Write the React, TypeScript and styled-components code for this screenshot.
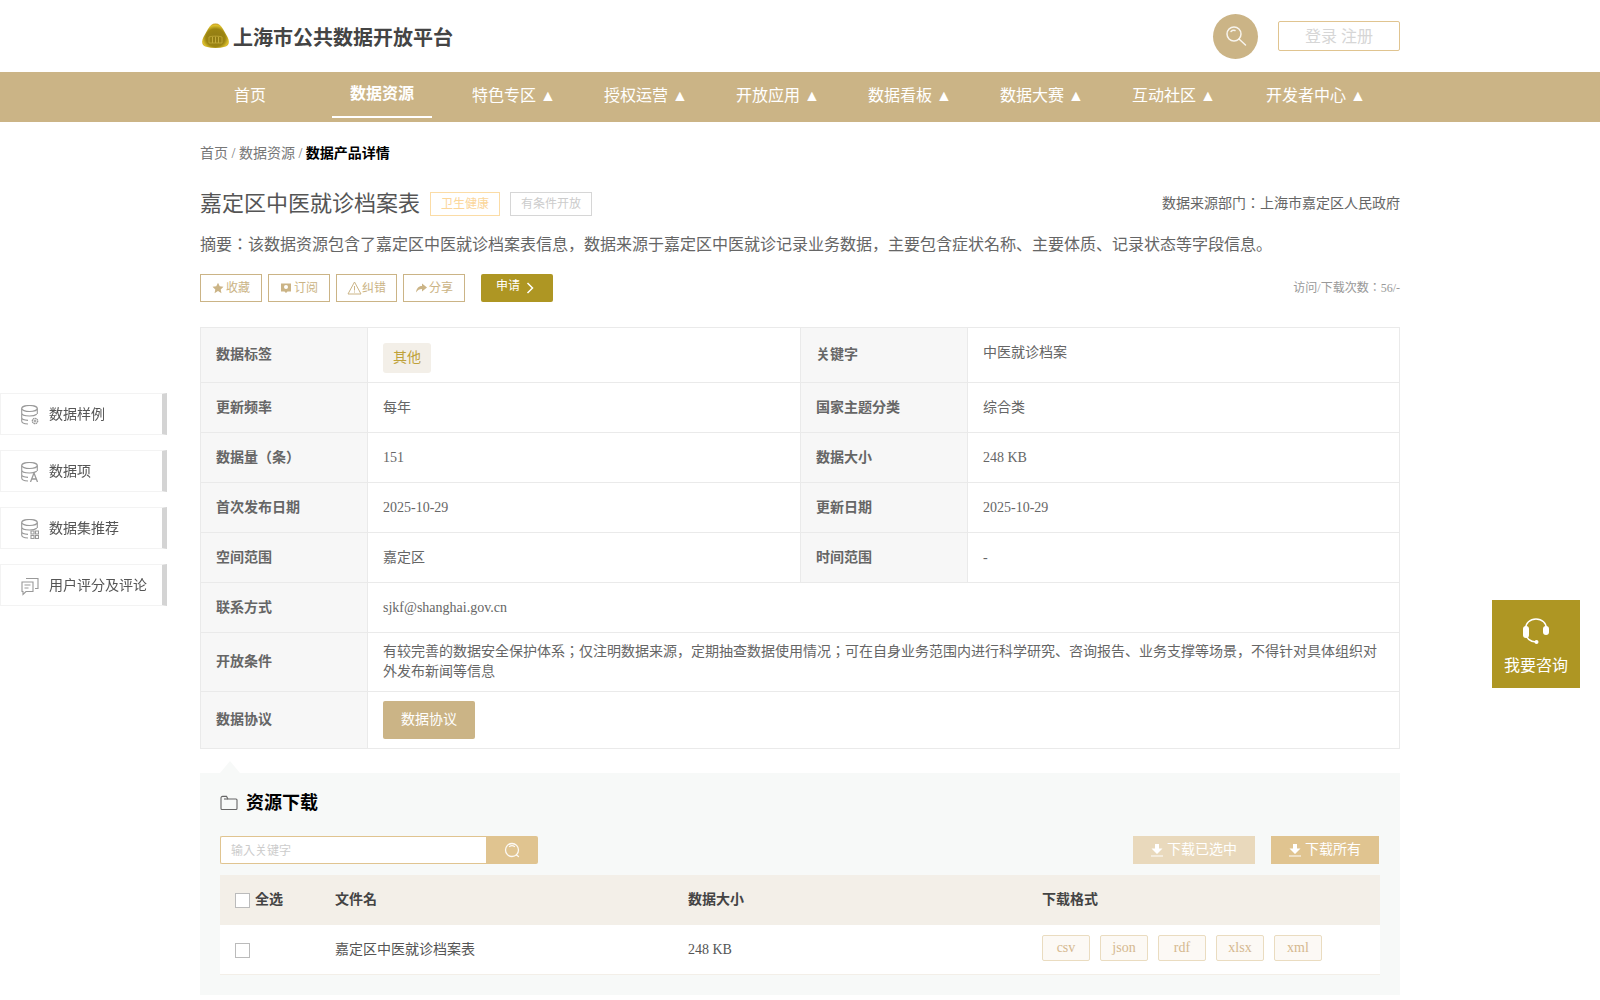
import { memo, FC, ReactNode } from 'react';
import styled, { createGlobalStyle } from 'styled-components';

const GOLD = '#cbb486';
const GOLD_LIGHT = '#e0c490';
const OLIVE = '#ae9623';

const GlobalStyle = createGlobalStyle`
  html, body { margin: 0; padding: 0; background: #fff; }
  body {
    font-family: "Liberation Serif", "Noto Sans CJK JP", serif;
    color: #666;
    overflow-x: hidden;
  }
  * { box-sizing: border-box; }
`;

const Wrap = styled.div`
  width: 1200px;
  margin: 0 auto;
`;

const Header = styled(Wrap)`
  height: 72px;
  display: flex;
  align-items: center;
  justify-content: space-between;
`;

const Brand = styled.div`
  display: flex;
  align-items: center;
  gap: 4px;
  padding-left: 2px;
`;

const BrandName = styled.span`
  padding-top: 4px;
  font-size: 20px;
  line-height: 26px;
  font-weight: 700;
  color: #444;
`;

const HeaderRight = styled.div`
  display: flex;
  align-items: center;
  gap: 20px;
`;

const SearchCircle = styled.div`
  width: 45px;
  height: 45px;
  border-radius: 50%;
  background: ${GOLD};
  display: flex;
  align-items: center;
  justify-content: center;
`;

const LoginBox = styled.div`
  width: 122px;
  height: 30px;
  border: 1px solid ${GOLD_LIGHT};
  border-radius: 2px;
  color: #d6d6d6;
  font-size: 16px;
  line-height: 29px;
  text-align: center;
`;

const NavBar = styled.div`
  height: 50px;
  background: ${GOLD};
`;

const NavRow = styled(Wrap)`
  display: flex;
  gap: 32px;
  height: 100%;
`;

const NavItem = styled.div<{ $active?: boolean }>`
  min-width: 100px;
  padding: 0 8px;
  height: 46px;
  line-height: ${p => (p.$active ? '44px' : '47px')};
  text-align: center;
  white-space: nowrap;
  color: #fff;
  font-size: 16px;
  font-weight: ${p => (p.$active ? 700 : 400)};
  border-bottom: ${p => (p.$active ? '2px solid #fff' : 'none')};

  &:last-child { margin-left: 2px; }
`;

const Breadcrumb = styled.div`
  margin-top: 22px;
  height: 20px;
  line-height: 20px;
  font-size: 14px;
  color: #777;
  b { color: #000; }
`;

const TitleRow = styled.div`
  margin-top: 20px;
  height: 40px;
  line-height: 24px;
  display: flex;
  align-items: center;
`;

const Title = styled.h1`
  margin: 0 10px 0 0;
  font-size: 22px;
  line-height: 30px;
  font-weight: 400;
  color: #555;
`;

const Tag = styled.span<{ $grey?: boolean }>`
  height: 24px;
  line-height: 22px;
  padding: 0 10px;
  margin-right: 10px;
  font-size: 12px;
  border: 1px solid ${p => (p.$grey ? '#d6d6d6' : '#fbdca6')};
  color: ${p => (p.$grey ? '#ccc' : '#fbd69a')};
`;

const Source = styled.div`
  margin-left: auto;
  font-size: 14px;
  color: #666;
`;

const Summary = styled.p`
  margin: 10px 0 0;
  font-size: 16px;
  line-height: 22px;
  color: #666;
`;

const ActionRow = styled.div`
  margin-top: 18px;
  height: 28px;
  display: flex;
  align-items: center;
  gap: 6px;
`;

const ActionBtn = styled.div<{ $w: number }>`
  height: 28px;
  width: ${p => p.$w}px;
  border: 1px solid ${GOLD};
  color: ${GOLD};
  font-size: 12px;
  line-height: 20px;
  display: flex;
  align-items: center;
  justify-content: center;
  gap: 2px;
`;

const ApplyBtn = styled.div`
  margin-left: 10px;
  width: 72px;
  height: 28px;
  background: ${OLIVE};
  border-radius: 2px;
  color: #fff;
  font-size: 12px;
  line-height: 18px;
  display: flex;
  align-items: center;
  justify-content: center;
  gap: 6px;
  padding: 0 4px 4px 0;
`;

const Visits = styled.div`
  margin-left: auto;
  font-size: 12px;
  line-height: 20px;
  color: #999;
`;

const InfoTable = styled.table`
  margin-top: 25px;
  width: 1200px;
  table-layout: fixed;
  border-collapse: separate;
  border-spacing: 0;
  border-top: 1px solid #eaeaea;
  border-left: 1px solid #eaeaea;
  font-size: 14px;
  line-height: 20px;
`;

const InfoRow = styled.tr<{ $h: number }>`
  height: ${p => p.$h}px;
`;

const Th = styled.th`
  background: #f7f7f7;
  border-right: 1px solid #eaeaea;
  border-bottom: 1px solid #eaeaea;
  padding: 0 15px;
  text-align: left;
  font-weight: 700;
  color: #666;
`;

const Td = styled.td<{ $top?: boolean }>`
  border-right: 1px solid #eaeaea;
  border-bottom: 1px solid #eaeaea;
  padding: ${p => (p.$top ? '15px 15px 0' : '0 15px')};
  vertical-align: ${p => (p.$top ? 'top' : 'middle')};
  color: #666;
`;

const LabelPill = styled.span`
  display: block;
  width: 48px;
  height: 30px;
  line-height: 30px;
  text-align: center;
  background: #f3efe8;
  border-radius: 3px;
  color: #bfa23a;
`;

const AgreementBtn = styled.div`
  width: 92px;
  height: 38px;
  background: ${GOLD};
  border-radius: 2px;
  color: #fff;
  line-height: 38px;
  text-align: center;
`;

const Download = styled.section`
  position: relative;
  margin-top: 24px;
  height: 222px;
  padding: 20px 20px 0;
  background: #f7f9f8;

  &::before {
    content: '';
    position: absolute;
    left: 20px;
    top: -12px;
    border-left: 10px solid transparent;
    border-right: 10px solid transparent;
    border-bottom: 12px solid #f7f9f8;
  }
`;

const SectionTitle = styled.div`
  height: 20px;
  line-height: 20px;
  display: flex;
  align-items: center;
  gap: 8px;
  font-size: 18px;
  font-weight: 700;
  color: #000;
`;

const Toolbar = styled.div`
  margin-top: 23px;
  height: 28px;
  display: flex;
  align-items: stretch;
`;

const KeywordInput = styled.div`
  width: 266px;
  background: #fff;
  border: 1px solid ${GOLD_LIGHT};
  border-right: none;
  border-radius: 2px 0 0 2px;
  padding-left: 10px;
  line-height: 28px;
  font-size: 12px;
  color: #ccc;
`;

const KeywordBtn = styled.div`
  width: 52px;
  background: ${GOLD_LIGHT};
  border-radius: 0 2px 2px 0;
  display: flex;
  align-items: center;
  justify-content: center;
`;

const DownloadBtn = styled.div<{ $muted?: boolean; $w: number }>`
  width: ${p => p.$w}px;
  margin-left: ${p => (p.$muted ? 'auto' : '16px')};
  margin-right: ${p => (p.$muted ? '0' : '1px')};
  background: ${p => (p.$muted ? '#e9d9bc' : GOLD_LIGHT)};
  color: #fff;
  font-size: 14px;
  line-height: 20px;
  display: flex;
  align-items: center;
  justify-content: center;
  gap: 4px;
`;

const FileGrid = styled.div<{ $head?: boolean }>`
  display: grid;
  grid-template-columns: 115px 353px 354px 1fr;
  align-items: center;
  height: 50px;
  line-height: 20px;
  margin-top: ${p => (p.$head ? '11px' : '0')};
  background: ${p => (p.$head ? '#f3efe8' : '#fff')};
  border-bottom: ${p => (p.$head ? 'none' : '1px solid #f3efe8')};
  font-size: 14px;
  font-weight: ${p => (p.$head ? 700 : 400)};
  color: ${p => (p.$head ? '#444' : '#555')};
`;

const CheckCell = styled.div`
  display: flex;
  align-items: center;
  gap: 5px;
  padding-left: 15px;
`;

const Check = styled.span`
  width: 15px;
  height: 15px;
  margin-top: 1px;
  background: #fff;
  border: 1px solid #bbb;
`;

const Formats = styled.div`
  display: flex;
  gap: 10px;
  margin-bottom: 3px;
`;

const Format = styled.span`
  width: 48px;
  height: 26px;
  line-height: 24px;
  text-align: center;
  background: #fcf9f5;
  border: 1px solid #eadcc0;
  border-radius: 2px;
  color: #d5b88f;
  font-size: 14px;
`;

const SideNav = styled.nav`
  position: fixed;
  left: 0;
  top: 393px;
  display: flex;
  flex-direction: column;
  gap: 15px;
`;

const SideItem = styled.div`
  width: 167px;
  height: 42px;
  display: flex;
  align-items: center;
  gap: 10px;
  padding: 2px 0 0 20px;
  background: #fff;
  border: 1px solid #f3f3f3;
  border-right: 5px solid #d4d4d4;
  font-size: 14px;
  line-height: 20px;
  color: #555;
`;

const Consult = styled.div`
  position: fixed;
  left: 1492px;
  top: 600px;
  width: 88px;
  height: 88px;
  background: ${OLIVE};
  color: #fff;
  font-size: 16px;
  line-height: 20px;
  display: flex;
  flex-direction: column;
  align-items: center;
  padding-top: 18px;
  gap: 12px;
`;

const Logo: FC = () => (
  <svg width="27" height="26" viewBox="0 0 27 26">
    <defs>
      <radialGradient id="lg" cx="0.5" cy="0.58" r="0.58">
        <stop offset="0" stopColor="#8f7a14" />
        <stop offset="0.62" stopColor="#9c8512" />
        <stop offset="0.86" stopColor="#dcc02c" />
        <stop offset="1" stopColor="#c69a22" />
      </radialGradient>
    </defs>
    <path d="M13.500 .5C17 .5 19 2.500 21 6l4.500 8c2.500 4.500 1.500 8.500-2.500 9.800-6 1.700-13 1.700-19 0C0 22.500-1 18.500 1.500 14L6 6C8 2.500 10 .5 13.500 .5z" fill="url(#lg)" />
    <path d="M7 14c3-1.200 10-1.200 13 0v6H7z" fill="none" stroke="#c4ac3a" strokeWidth="0.800" />
    <path d="M10.500 14v6M13.500 13.500v6.500M16.500 14v6" stroke="#c4ac3a" strokeWidth="1" />
  </svg>
);

const Magnifier: FC = () => (
  <svg width="22" height="22" viewBox="0 0 22 22" fill="none" stroke="#fff" strokeOpacity="0.85" strokeWidth="1.500" strokeLinecap="round">
    <circle cx="9" cy="9" r="7" />
    <path d="M6 6.500C7 5.500 8.500 5 10 5.500" />
    <path d="M14 14l6.500 6" />
  </svg>
);

const SmallSearch: FC = () => (
  <svg width="16" height="16" viewBox="0 0 16 16" fill="none" stroke="#fff" strokeOpacity="0.9" strokeWidth="1.300" strokeLinecap="round">
    <circle cx="8" cy="8" r="6.500" />
    <path d="M5.500 4.500c1.500-1 3.500-1 5 0" />
    <path d="M12.500 13l2 1.500" />
  </svg>
);

const Star: FC = () => (
  <svg width="12" height="12" viewBox="0 0 24 24" fill={GOLD}>
    <path d="M12 1.500l3.400 7 7.600 1-5.600 5.300 1.500 7.700L12 18l-6.900 4.500 1.500-7.700L1 9.500l7.600-1z" />
  </svg>
);

const Subscribe: FC = () => (
  <svg width="12" height="12" viewBox="0 0 12 12">
    <path d="M1 1.500h10v8H7.500L6 11 4.500 9.500H1z" fill={GOLD} />
    <circle cx="6" cy="5" r="2" fill="#fff" />
  </svg>
);

const WarnSvg = styled.svg`
  margin-right: -2px;
`;

const Warn: FC = () => (
  <WarnSvg width="15" height="14" viewBox="0 0 15 14" fill="none" stroke={GOLD} strokeWidth="1">
    <path d="M7.500 1L14 13H1z" />
    <path d="M7.500 5v4.500M7.500 10.500v1" />
  </WarnSvg>
);

const Share: FC = () => (
  <svg width="12" height="12" viewBox="0 0 12 12">
    <path d="M7 1.500L12 5.500 7 9.500V7C4.500 7 2.500 8 1 10.500 1.500 6.500 3.500 4 7 4z" fill={GOLD} />
  </svg>
);

const Chevron = styled.svg`
  margin-top: 4px;
`;

const DbBase: FC<{ children: ReactNode }> = ({ children }) => (
  <svg width="18" height="20" viewBox="0 0 18 20" fill="none" stroke="#999" strokeWidth="1.100">
    <ellipse cx="8.500" cy="3.500" rx="7.800" ry="3" />
    <path d="M.7 3.500v12.500c0 1.600 2.500 2.800 6.300 3M16.300 3.500v5.500M.7 8c0 1.700 3.400 3 7.800 3 2.800 0 5.700-.6 7.300-1.800M.7 12.500c0 1.500 2.600 2.700 6.300 2.900" />
    {children}
  </svg>
);

const FolderIcon: FC = () => (
  <svg width="18" height="16" viewBox="0 0 18 16" fill="none" stroke="#666" strokeWidth="1.100">
    <path d="M1 3c0-1 .6-1.600 1.600-1.600h3.900L8 4h8c.6 0 1 .4 1 1v8.500c0 .6-.4 1-1 1H2c-.6 0-1-.4-1-1z" />
    <path d="M8 4h-4" />
  </svg>
);

const DownArrow: FC = () => (
  <svg width="12" height="14" viewBox="0 0 12 14" fill="#fff">
    <path d="M4 1h4v4.500h3.500L6 11 .5 5.500H4z" />
    <path d="M0 12.500h12v1H0z" />
  </svg>
);

const ChatIcon: FC = () => (
  <svg width="18" height="20" viewBox="0 0 18 20" fill="none" stroke="#999" strokeWidth="1.100">
    <path d="M1 6h11v9.500H5l-3 3v-3H1z" />
    <path d="M5 2.500h12v10h-3" />
    <path d="M3.500 9h6M3.500 12h4" />
  </svg>
);

const Headset: FC = () => (
  <svg width="26" height="26" viewBox="0 0 26 26" fill="none">
    <path d="M2.500 11C2.500 5 7 1 13 1s10.500 4 10.500 10" stroke="#fff" strokeWidth="1.400" />
    <path d="M2.500 15c.5 5 4.500 9 10.500 9" stroke="#fff" strokeWidth="1.400" />
    <rect x="0" y="8" width="6" height="12" rx="3" fill="#fff" />
    <rect x="20" y="8" width="6" height="9" rx="3" fill="#fff" />
    <circle cx="13.500" cy="24" r="2" fill="#fff" />
  </svg>
);

const navItems = ['特色专区 ▲', '授权运营 ▲', '开放应用 ▲', '数据看板 ▲', '数据大赛 ▲', '互动社区 ▲', '开发者中心 ▲'];

const dbGear = <g><circle cx="14" cy="16" r="2.600" strokeWidth="1.500" strokeDasharray="1.500 0.500" /><circle cx="14" cy="16" r="0.500" /></g>;
const dbLetter = <path d="M9.500 20l3.500-9 3.500 9M10.800 17h4.400" strokeWidth="1.300" />;
const dbGrid = <path d="M10 12h3v3h-3zM14.500 12h3v3h-3zM10 16.500h3v3h-3zM14.500 16.500h3v3h-3z" />;

const App: FC = () => {
  return (
    <>
      <GlobalStyle />
      <Header>
        <Brand>
          <Logo />
          <BrandName>上海市公共数据开放平台</BrandName>
        </Brand>
        <HeaderRight>
          <SearchCircle>
            <Magnifier />
          </SearchCircle>
          <LoginBox>登录 注册</LoginBox>
        </HeaderRight>
      </Header>
      <NavBar>
        <NavRow>
          <NavItem>首页</NavItem>
          <NavItem $active>数据资源</NavItem>
          {navItems.map(item => (
            <NavItem key={item}>{item}</NavItem>
          ))}
        </NavRow>
      </NavBar>
      <Wrap>
        <Breadcrumb>
          首页 / 数据资源 / <b>数据产品详情</b>
        </Breadcrumb>
        <TitleRow>
          <Title>嘉定区中医就诊档案表</Title>
          <Tag>卫生健康</Tag>
          <Tag $grey>有条件开放</Tag>
          <Source>数据来源部门：上海市嘉定区人民政府</Source>
        </TitleRow>
        <Summary>摘要：该数据资源包含了嘉定区中医就诊档案表信息，数据来源于嘉定区中医就诊记录业务数据，主要包含症状名称、主要体质、记录状态等字段信息。</Summary>
        <ActionRow>
          <ActionBtn $w={62}><Star />收藏</ActionBtn>
          <ActionBtn $w={62}><Subscribe />订阅</ActionBtn>
          <ActionBtn $w={61}><Warn />纠错</ActionBtn>
          <ActionBtn $w={62}><Share />分享</ActionBtn>
          <ApplyBtn>
            申请
            <Chevron width="8" height="12" viewBox="0 0 8 12" fill="none" stroke="#fff" strokeWidth="1.500">
              <path d="M1.500 1l5 5-5 5" />
            </Chevron>
          </ApplyBtn>
          <Visits>访问/下载次数：56/-</Visits>
        </ActionRow>
        <InfoTable>
          <colgroup>
            <col width="167" />
            <col width="433" />
            <col width="167" />
            <col width="432" />
          </colgroup>
          <tbody>
            <InfoRow $h={55}>
              <Th>数据标签</Th>
              <Td $top><LabelPill>其他</LabelPill></Td>
              <Th>关键字</Th>
              <Td $top>中医就诊档案</Td>
            </InfoRow>
            <InfoRow $h={50}>
              <Th>更新频率</Th>
              <Td>每年</Td>
              <Th>国家主题分类</Th>
              <Td>综合类</Td>
            </InfoRow>
            <InfoRow $h={50}>
              <Th>数据量（条）</Th>
              <Td>151</Td>
              <Th>数据大小</Th>
              <Td>248 KB</Td>
            </InfoRow>
            <InfoRow $h={50}>
              <Th>首次发布日期</Th>
              <Td>2025-10-29</Td>
              <Th>更新日期</Th>
              <Td>2025-10-29</Td>
            </InfoRow>
            <InfoRow $h={50}>
              <Th>空间范围</Th>
              <Td>嘉定区</Td>
              <Th>时间范围</Th>
              <Td>-</Td>
            </InfoRow>
            <InfoRow $h={50}>
              <Th>联系方式</Th>
              <Td colSpan={3}>sjkf@shanghai.gov.cn</Td>
            </InfoRow>
            <InfoRow $h={59}>
              <Th>开放条件</Th>
              <Td colSpan={3}>有较完善的数据安全保护体系；仅注明数据来源，定期抽查数据使用情况；可在自身业务范围内进行科学研究、咨询报告、业务支撑等场景，不得针对具体组织对外发布新闻等信息</Td>
            </InfoRow>
            <InfoRow $h={57}>
              <Th>数据协议</Th>
              <Td colSpan={3}><AgreementBtn>数据协议</AgreementBtn></Td>
            </InfoRow>
          </tbody>
        </InfoTable>
        <Download>
          <SectionTitle>
            <FolderIcon />
            资源下载
          </SectionTitle>
          <Toolbar>
            <KeywordInput>输入关键字</KeywordInput>
            <KeywordBtn>
              <SmallSearch />
            </KeywordBtn>
            <DownloadBtn $muted $w={122}><DownArrow />下载已选中</DownloadBtn>
            <DownloadBtn $w={108}><DownArrow />下载所有</DownloadBtn>
          </Toolbar>
          <FileGrid $head>
            <CheckCell><Check />全选</CheckCell>
            <span>文件名</span>
            <span>数据大小</span>
            <span>下载格式</span>
          </FileGrid>
          <FileGrid>
            <CheckCell><Check /></CheckCell>
            <span>嘉定区中医就诊档案表</span>
            <span>248 KB</span>
            <Formats>
              {['csv', 'json', 'rdf', 'xlsx', 'xml'].map(f => (
                <Format key={f}>{f}</Format>
              ))}
            </Formats>
          </FileGrid>
        </Download>
      </Wrap>
      <SideNav>
        <SideItem><DbBase>{dbGear}</DbBase>数据样例</SideItem>
        <SideItem><DbBase>{dbLetter}</DbBase>数据项</SideItem>
        <SideItem><DbBase>{dbGrid}</DbBase>数据集推荐</SideItem>
        <SideItem><ChatIcon />用户评分及评论</SideItem>
      </SideNav>
      <Consult>
        <Headset />
        我要咨询
      </Consult>
    </>
  );
};

export default memo(App);
